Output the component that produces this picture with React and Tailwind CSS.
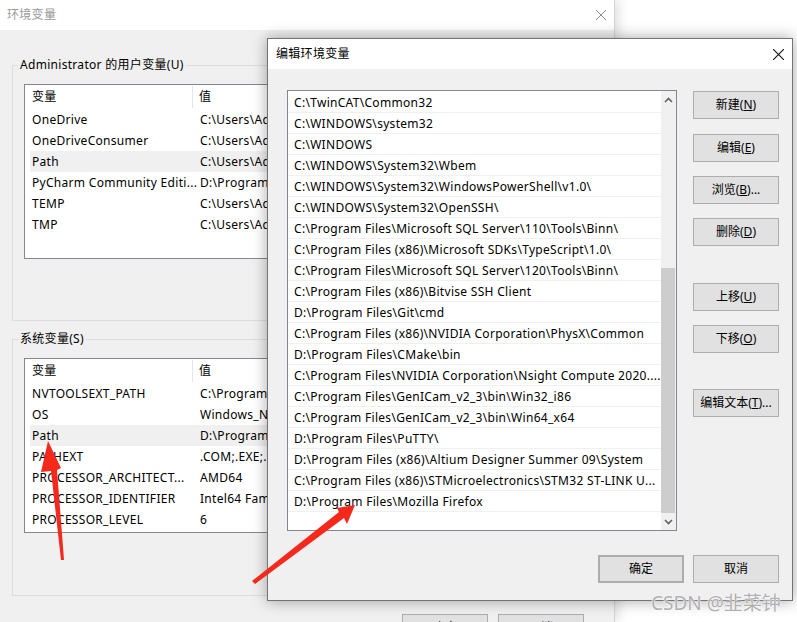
const userVars = [
  ["OneDrive", "C:\\Users\\Administrator\\OneDrive"],
  ["OneDriveConsumer", "C:\\Users\\Administrator\\OneDrive"],
  ["Path", "C:\\Users\\Administrator\\AppData"],
  ["PyCharm Community Editi...", "D:\\Program Files\\JetBrains"],
  ["TEMP", "C:\\Users\\Administrator\\AppData"],
  ["TMP", "C:\\Users\\Administrator\\AppData"],
];

const sysVars = [
  ["NVTOOLSEXT_PATH", "C:\\Program Files\\NVIDIA"],
  ["OS", "Windows_NT"],
  ["Path", "D:\\Program Files\\Python"],
  ["PATHEXT", ".COM;.EXE;.BAT;.CMD"],
  ["PROCESSOR_ARCHITECT...", "AMD64"],
  ["PROCESSOR_IDENTIFIER", "Intel64 Family 6"],
  ["PROCESSOR_LEVEL", "6"],
];

const paths = [
  "C:\\TwinCAT\\Common32",
  "C:\\WINDOWS\\system32",
  "C:\\WINDOWS",
  "C:\\WINDOWS\\System32\\Wbem",
  "C:\\WINDOWS\\System32\\WindowsPowerShell\\v1.0\\",
  "C:\\WINDOWS\\System32\\OpenSSH\\",
  "C:\\Program Files\\Microsoft SQL Server\\110\\Tools\\Binn\\",
  "C:\\Program Files (x86)\\Microsoft SDKs\\TypeScript\\1.0\\",
  "C:\\Program Files\\Microsoft SQL Server\\120\\Tools\\Binn\\",
  "C:\\Program Files (x86)\\Bitvise SSH Client",
  "D:\\Program Files\\Git\\cmd",
  "C:\\Program Files (x86)\\NVIDIA Corporation\\PhysX\\Common",
  "D:\\Program Files\\CMake\\bin",
  "C:\\Program Files\\NVIDIA Corporation\\Nsight Compute 2020....",
  "C:\\Program Files\\GenICam_v2_3\\bin\\Win32_i86",
  "C:\\Program Files\\GenICam_v2_3\\bin\\Win64_x64",
  "D:\\Program Files\\PuTTY\\",
  "D:\\Program Files (x86)\\Altium Designer Summer 09\\System",
  "C:\\Program Files (x86)\\STMicroelectronics\\STM32 ST-LINK U...",
  "D:\\Program Files\\Mozilla Firefox",
];

function Btn({ children, className = "" }) {
  return (
    <div
      className={`flex items-center justify-center w-[86px] h-[28px] bg-[#e1e1e1] border border-[#adadad] text-[12px] text-black leading-none ${className}`}
    >
      {children}
    </div>
  );
}

function CloseX({ color, size }) {
  return (
    <svg width={size} height={size} viewBox="0 0 10 10">
      <path d="M0 0 L10 10 M10 0 L0 10" stroke={color} strokeWidth="1" />
    </svg>
  );
}

function VarList({ rows, selected }) {
  return (
    <div className="mt-[11px] h-[175px] border border-[#828790] bg-white text-[12px] text-black">
      {/* header */}
      <div className="ml-[5px] flex h-[24px] items-center">
        <div className="w-[163px] h-[22px] flex items-center pl-[2px] border-r border-[#e5e5e5]">变量</div>
        <div className="pl-[6px]">值</div>
      </div>
      {rows.map(([n, v], i) => (
        <div
          key={n}
          className={`ml-[5px] flex h-[21px] items-center whitespace-nowrap ${i === selected ? "bg-[#f0f0f0]" : ""}`}
        >
          <div className="w-[170px] pl-[2px] overflow-hidden">{n}</div>
          <div className="overflow-hidden">{v}</div>
        </div>
      ))}
    </div>
  );
}

export default function App() {
  return (
    <div className="relative w-[797px] h-[622px] overflow-hidden bg-white tracking-[0.3px] font-['Noto_Sans','Noto_Sans_CJK_SC',sans-serif]">
      {/* background dialog: 环境变量 */}
      <div className="w-[615px] h-[622px] flex flex-col bg-[#f0f0f0] border-r border-[#d4d4d4] shadow-[4px_0_10px_rgba(0,0,0,0.12)]">
        <div className="h-[30px] shrink-0 bg-white flex items-center justify-between pl-[7px] pr-[8px]">
          <span className="text-[12px] text-[#999]">环境变量</span>
          <CloseX color="#8c8c8c" size={10} />
        </div>
        <div className="px-[12px]">
          <fieldset className="mt-[27px] h-[264px] border border-[#dcdcdc]">
            <legend className="ml-[5px] px-[2px] text-[12px] leading-[16px] text-black">
              Administrator 的用户变量(U)
            </legend>
            <div className="px-[11px]">
              <VarList rows={userVars} selected={2} />
            </div>
          </fieldset>
          <fieldset className="mt-[10px] h-[265px] border border-[#dcdcdc]">
            <legend className="ml-[5px] px-[2px] text-[12px] leading-[16px] text-black">系统变量(S)</legend>
            <div className="px-[11px]">
              <VarList rows={sysVars} selected={2} />
            </div>
          </fieldset>
        </div>
        <div className="mt-[18px] flex justify-end gap-[10px] pr-[30px]">
          <Btn>确定</Btn>
          <Btn>取消</Btn>
        </div>
      </div>

      {/* foreground dialog: 编辑环境变量 */}
      <div className="absolute left-[267px] top-[38px] w-[526px] h-[563px] border border-[#747474] bg-[#f0f0f0] shadow-[0_0_14px_rgba(0,0,0,0.35)] flex flex-col">
        <div className="h-[30px] shrink-0 bg-white flex items-center justify-between pl-[8px] pr-[8px]">
          <span className="text-[12px] text-black">编辑环境变量</span>
          <CloseX color="#111" size={11} />
        </div>
        <div className="pt-[21px] pl-[19px] pr-[13px] flex gap-[16px]">
          <div className="w-[390px] h-[441px] border border-[#828790] bg-white flex">
            <div className="flex-1 pt-[1px] text-[12px] text-black">
              {paths.map((p) => (
                <div
                  key={p}
                  className="h-[21px] border-b border-[#f0f0f0] pl-[6px] pt-[2px] flex items-center whitespace-nowrap overflow-hidden"
                >
                  {p}
                </div>
              ))}
            </div>
            <div className="w-[17px] bg-[#f0f0f0] flex flex-col">
              <div className="h-[17px] flex items-center justify-center">
                <svg width="9" height="6" viewBox="0 0 9 6">
                  <path d="M1 5 L4.5 1.5 L8 5" stroke="#606060" strokeWidth="1.6" fill="none" />
                </svg>
              </div>
              <div className="h-[160px]" />
              <div className="h-[245px] mr-[1px] bg-[#cdcdcd]" />
              <div className="h-[17px] flex items-center justify-center">
                <svg width="9" height="6" viewBox="0 0 9 6">
                  <path d="M1 1 L4.5 4.5 L8 1" stroke="#606060" strokeWidth="1.6" fill="none" />
                </svg>
              </div>
            </div>
          </div>
          <div className="flex flex-col pt-[1px] tracking-normal">
            <Btn>
              新建(<span className="underline">N</span>)
            </Btn>
            <Btn className="mt-[15px]">
              编辑(<span className="underline">E</span>)
            </Btn>
            <Btn className="mt-[14px]">
              浏览(<span className="underline">B</span>)...
            </Btn>
            <Btn className="mt-[14px]">
              删除(<span className="underline">D</span>)
            </Btn>
            <Btn className="mt-[37px]">
              上移(<span className="underline">U</span>)
            </Btn>
            <Btn className="mt-[14px]">
              下移(<span className="underline">O</span>)
            </Btn>
            <Btn className="mt-[36px]">
              编辑文本(<span className="underline">T</span>)...
            </Btn>
          </div>
        </div>
        <div className="mt-[24px] flex justify-end gap-[9px] pr-[13px] tracking-normal">
          <Btn className="border-2 border-[#0078d7]">确定</Btn>
          <Btn>取消</Btn>
        </div>
      </div>

      {/* red annotation arrows */}
      <svg className="absolute left-0 top-0 pointer-events-none" width="797" height="622" viewBox="0 0 797 622">
        <polygon points="48,441 61,468 57,470 64,560 61,560 51,471 41,472" fill="#f5281c" />
        <polygon points="355,505 347,524 344,518 255,584 252,581 339,512 337,508" fill="#f5281c" />
      </svg>

      {/* watermark */}
      <div className="absolute left-[651px] top-[591px] text-[19px] leading-[24px] tracking-normal text-[#b0b0b0] [text-shadow:0_0_2px_#fff,0_0_1px_#fff]">
        CSDN @韭菜钟
      </div>
    </div>
  );
}
